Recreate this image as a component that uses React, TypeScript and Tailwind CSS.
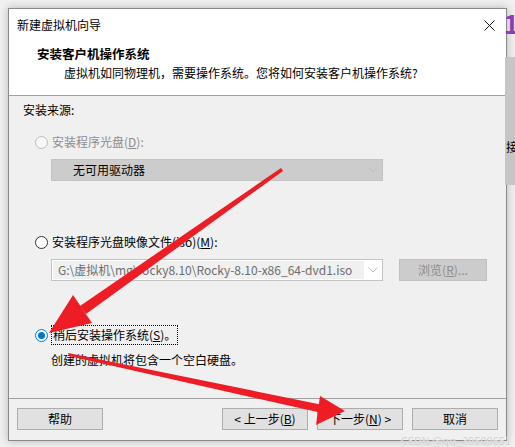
import React from 'react';

const font = { fontFamily: '"Noto Sans CJK SC", "Liberation Sans", sans-serif' };

function Radio({ state }: { state: 'off' | 'disabled' | 'on' }) {
  if (state === 'on') {
    return (
      <span className="flex h-[13px] w-[13px] items-center justify-center rounded-full border border-[#0078d7] bg-white">
        <span className="h-[7px] w-[7px] rounded-full bg-[#0078d7]" />
      </span>
    );
  }
  return (
    <span
      className={
        state === 'disabled'
          ? 'h-[13px] w-[13px] rounded-full border border-[#bcbcbc] bg-[#f7f7f7]'
          : 'h-[13px] w-[13px] rounded-full border border-[#333333] bg-white'
      }
    />
  );
}

function Chevron() {
  return (
    <svg width="10" height="6" viewBox="0 0 10 6" className="shrink-0">
      <path d="M0.5 0.5 L5 5 L9.5 0.5" fill="none" stroke="#bdbdbd" strokeWidth="1" />
    </svg>
  );
}

function Btn({ children }: { children: React.ReactNode }) {
  return (
    <div className="flex h-[22px] w-[86px] items-center justify-center border border-[#adadad] bg-[#e1e1e1] text-[12px] text-black">
      {children}
    </div>
  );
}

/**
 * Windows 风格的新建虚拟机向导，带红色标注箭头。
 */
export default function App() {
  return (
    <div className="relative h-[447px] w-[515px] overflow-hidden bg-[#f0f0f0]" style={font}>
      {/* window behind the dialog */}
      <div className="absolute right-0 top-[57px] h-[128px] w-[10px] bg-[#c6c6c6]">
        <span className="absolute left-[1px] top-[84px] text-[12px] leading-none text-black">接</span>
      </div>
      <span className="absolute right-[-4px] top-[10px] text-[26px] font-bold leading-none text-[#8a3fb8]">1</span>

      <div className="flex pl-2 pt-2">
        <div className="flex h-[433px] w-[499px] flex-col border border-[#8a8a8a] bg-[#f0f0f0] shadow-[0_0_8px_rgba(0,0,0,0.25)]">
          {/* header */}
          <div className="flex h-[87px] flex-col border-b border-[#a0a0a0] bg-white">
            <div className="flex h-[31px] items-center justify-between pl-2 pr-[11px] pt-[1px]">
              <span className="text-[12px] text-black">新建虚拟机向导</span>
              <svg width="11" height="11" viewBox="0 0 11 11">
                <path d="M0.5 0.5 L10.5 10.5 M10.5 0.5 L0.5 10.5" stroke="#111" strokeWidth="1" />
              </svg>
            </div>
            <div className="pl-[28px] pt-[6px] text-[12.5px] font-bold leading-[16px] text-black">安装客户机操作系统</div>
            <div className="pl-[55px] pt-[3px] text-[12px] leading-[16px] text-black">
              虚拟机如同物理机，需要操作系统。您将如何安装客户机操作系统?
            </div>
          </div>

          {/* body */}
          <div className="flex h-[303px] flex-col border-b border-[#a0a0a0] pl-[14px] pt-[6px] text-[12px] leading-[16px]">
            <div className="text-black">安装来源:</div>

            <div className="mt-[16px] flex h-[16px] items-center gap-[4px] pl-[12px] text-[#8d8d8d]">
              <Radio state="disabled" />
              <span>
                安装程序光盘(<span className="underline">D</span>):
              </span>
            </div>
            <div className="ml-[28px] mt-[9px] flex h-[22px] w-[332px] items-center justify-between border border-[#c3c3c3] bg-[#cccccc] pl-[21px] pr-[4px] text-black">
              <span>无可用驱动器</span>
              <Chevron />
            </div>

            <div className="mt-[53px] flex h-[16px] items-center gap-[4px] pl-[12px] text-black">
              <Radio state="off" />
              <span>
                安装程序光盘映像文件(iso)(<span className="underline">M</span>):
              </span>
            </div>
            <div className="ml-[28px] mt-[9px] flex items-center gap-[16px]">
              <div className="flex h-[22px] w-[332px] items-center justify-between border border-[#c3c3c3] bg-white p-[1px] pr-[4px]">
                <span className="flex h-full w-[311px] items-center bg-[#f0f0f0] pl-[5px] text-[#6d6d6d]">
                  G:\虚拟机\mg\rocky8.10\Rocky-8.10-x86_64-dvd1.iso
                </span>
                <Chevron />
              </div>
              <div className="flex h-[22px] w-[88px] items-center justify-center border border-[#bfbfbf] bg-[#cccccc] text-[#8d8d8d]">
                浏览(<span className="underline">R</span>)...
              </div>
            </div>

            <div className="mt-[44px] flex h-[20px] items-center gap-[3px] pl-[12px] text-black">
              <Radio state="on" />
              <span className="flex h-[20px] items-center border border-dotted border-black px-[1px]">
                稍后安装操作系统(<span className="underline">S</span>)。
              </span>
            </div>
            <div className="ml-[28px] mt-[7px] text-black">创建的虚拟机将包含一个空白硬盘。</div>
          </div>

          {/* footer */}
          <div className="flex items-center pl-[8px] pt-[9px]">
            <Btn>帮助</Btn>
            <div className="ml-[119px] flex gap-[9px]">
              <Btn>
                &lt; 上一步(<span className="underline">B</span>)
              </Btn>
              <Btn>
                下一步(<span className="underline">N</span>) &gt;
              </Btn>
              <Btn>取消</Btn>
            </div>
          </div>
        </div>
      </div>

      {/* red annotation arrows */}
      <svg className="pointer-events-none absolute left-0 top-0" width="515" height="447" viewBox="0 0 515 447">
        <polygon points="281,168 283,171 86,314 80,306" fill="#ee1c25" />
        <polygon points="49,333 73,295 92,323" fill="#ee1c25" />
        <polygon points="68,353 69,356 322,413 323,405" fill="#ee1c25" />
        <polygon points="345,411 320,396 316,425" fill="#ee1c25" />
      </svg>

      <span
        className="absolute bottom-[0px] right-[4px] text-[11px] leading-[14px] text-[#d0d0d0]"
        style={{ textShadow: '0 0 1px #fff' }}
      >
        CSDN @qq_39509651
      </span>
    </div>
  );
}
